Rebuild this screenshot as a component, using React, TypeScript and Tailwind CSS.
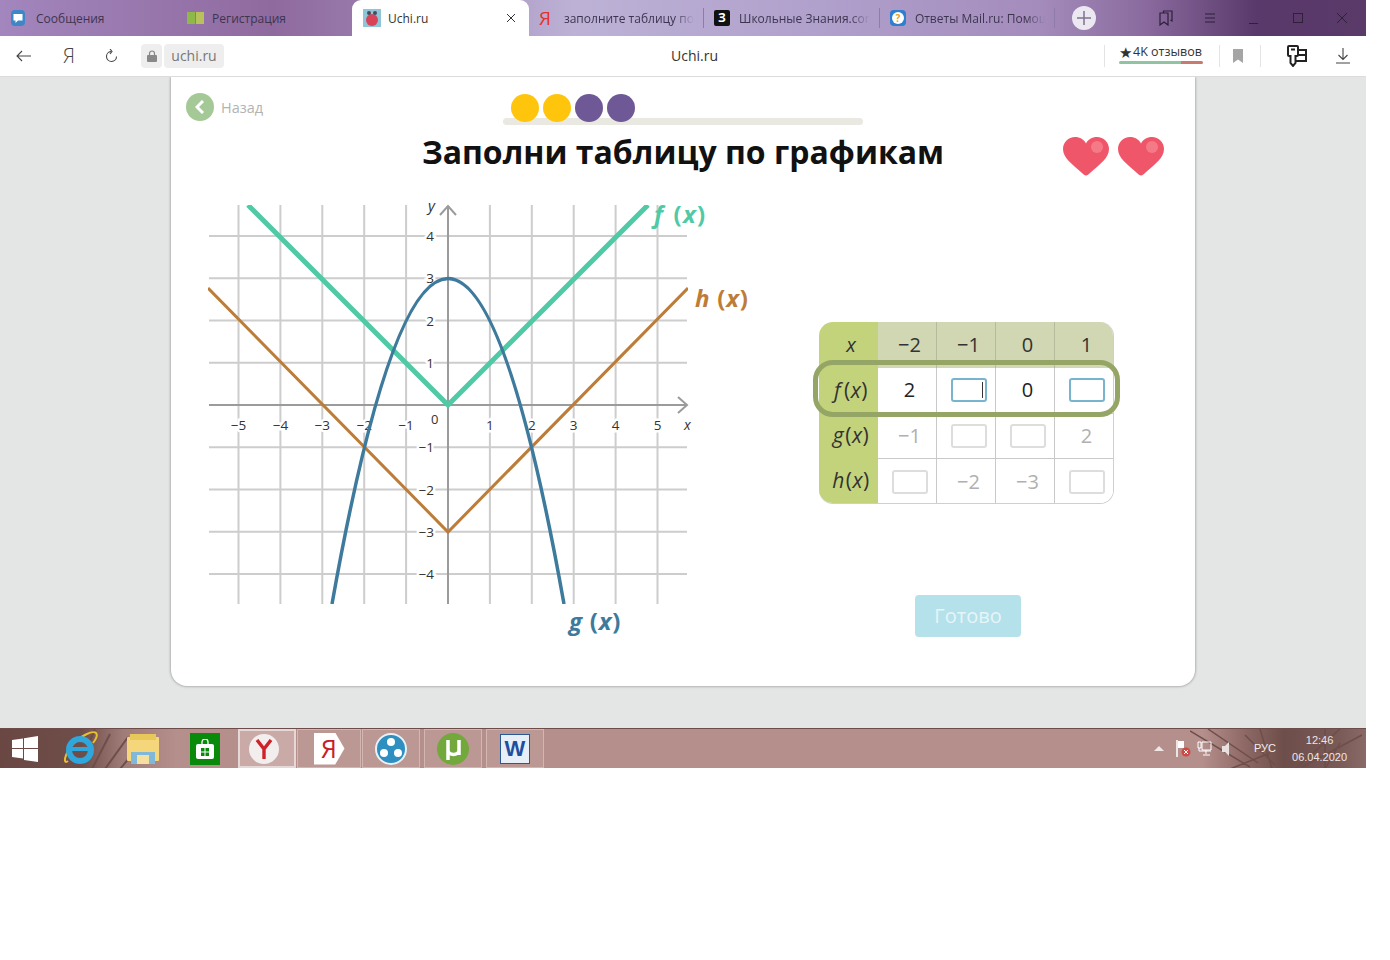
import type { ReactNode } from "react";

const font = { fontFamily: '"Open Sans", "Noto Sans", sans-serif' };

const minus = "\u2212";

function TabFavicon({ kind }: { kind: string }) {
  if (kind === "msg")
    return (
      <svg width="14" height="16" viewBox="0 0 14 16">
        <rect width="14" height="16" rx="4" fill="#3f86c6" />
        <path d="M2.500 4h9v6.500H7L4.500 13v-2.500h-2z" fill="#fff" />
      </svg>
    );
  if (kind === "reg")
    return (
      <svg width="18" height="12" viewBox="0 0 18 12">
        <rect width="8" height="12" fill="#8fb84a" />
        <rect x="9" width="8" height="12" fill="#b9c25a" />
      </svg>
    );
  if (kind === "uchi")
    return (
      <svg width="18" height="18" viewBox="0 0 18 18">
        <rect width="18" height="18" fill="#8ec5d8" />
        <circle cx="9" cy="11" r="6" fill="#d9435a" />
        <circle cx="6" cy="4" r="2" fill="#4a4a5a" />
        <circle cx="12" cy="4" r="2" fill="#4a4a5a" />
      </svg>
    );
  if (kind === "ya")
    return <span className="w-[16px] text-[19px] leading-none text-[#e5322d]">Я</span>;
  if (kind === "zn")
    return (
      <span className="flex h-[16px] w-[16px] items-center justify-center rounded-[2px] bg-[#111] text-[12px] font-bold leading-none text-white">
        З
      </span>
    );
  return (
    <span className="flex h-[16px] w-[16px] items-center justify-center rounded-[4px] bg-[#2d7fd0]">
      <span className="flex h-[12px] w-[12px] items-center justify-center rounded-full bg-[#fff] text-[10px] font-bold leading-none text-[#e8a020]">
        ?
      </span>
    </span>
  );
}

function Tab(props: { kind: string; title: string; w: string; sep?: boolean; fade?: boolean; pl: string; gap: string }) {
  return (
    <div className={`flex h-[36px] shrink-0 items-center ${props.w} ${props.pl} ${props.gap}`}>
      <TabFavicon kind={props.kind} />
      <span
        className={`overflow-hidden whitespace-nowrap pt-[1px] text-[12px] text-[#3d3550] ${
          props.fade ? "w-[131px] [mask-image:linear-gradient(90deg,#000_85%,transparent)]" : ""
        }`}
      >
        {props.title}
      </span>
      {props.sep && <span className="ml-auto h-[20px] w-px bg-[#8f7caa]" />}
    </div>
  );
}

function TabStrip() {
  return (
    <div className="flex h-[36px] items-center bg-[linear-gradient(90deg,#a286bd_0%,#8f6a9f_20%,#9a7cae_28%,#bdb2d6_42%,#b0a0cc_60%,#a48cbc_76%,#8a6a9e_84%,#59386b_92%,#5a3a68_100%)]">
      <Tab kind="msg" title="Сообщения" w="w-[176px]" pl="pl-[11px]" gap="gap-[11px]" />
      <Tab kind="reg" title="Регистрация" w="w-[176px]" pl="pl-[11px]" gap="gap-[7px]" />
      <div className="flex h-[36px] w-[177px] shrink-0 items-center rounded-t-[9px] bg-white pl-[11px] pr-[13px]">
        <TabFavicon kind="uchi" />
        <span className="ml-[7px] flex-1 pt-[1px] text-[12px] text-[#333]">Uchi.ru</span>
        <svg width="10" height="10" viewBox="0 0 10 10" stroke="#333" strokeWidth="1">
          <path d="M1 1l8 8M9 1l-8 8" />
        </svg>
      </div>
      <Tab kind="ya" title="заполните таблицу по графикам" w="w-[175px]" pl="pl-[10px]" gap="gap-[9px]" sep fade />
      <Tab kind="zn" title="Школьные Знания.com" w="w-[176px]" pl="pl-[10px]" gap="gap-[9px]" sep fade />
      <Tab kind="ans" title="Ответы Mail.ru: Помощь" w="w-[175px]" pl="pl-[10px]" gap="gap-[9px]" sep fade />
      <span className="ml-[17px] flex h-[24px] w-[24px] shrink-0 items-center justify-center rounded-full bg-[#ece8f2]">
        <svg width="14" height="14" viewBox="0 0 14 14" stroke="#7d7390" strokeWidth="1.500">
          <path d="M7 0v14M0 7h14" />
        </svg>
      </span>
      <div className="ml-[63px] flex items-center">
        <svg width="14" height="16" viewBox="0 0 14 16" fill="none" stroke="#2d2038" strokeWidth="1.200">
          <path d="M4.500 3V1h8.500v10l-1.500-1M1 3h8v12l-4-3-4 3z" />
        </svg>
        <svg className="ml-[32px]" width="10" height="10" viewBox="0 0 10 10" stroke="#2d2038">
          <path d="M0 1h10M0 5h10M0 9h10" />
        </svg>
        <span className="ml-[34px] mt-[10px] h-px w-[9px] bg-[#2d2038]" />
        <span className="ml-[35px] h-[10px] w-[10px] border border-[#2d2038]" />
        <svg className="ml-[34px]" width="10" height="10" viewBox="0 0 10 10" stroke="#2d2038">
          <path d="M0 0l10 10M10 0L0 10" />
        </svg>
      </div>
    </div>
  );
}

function AddressBar() {
  return (
    <div className="flex h-[41px] items-center rounded-t-[10px] border-b border-[#dcdcdc] bg-white">
      <svg className="ml-[16px]" width="15" height="12" viewBox="0 0 15 12" fill="none" stroke="#444" strokeWidth="1.100">
        <path d="M15 6H1M6 1L1 6l5 5" />
      </svg>
      <span className="ml-[32px] w-[12px] text-[20px] font-light leading-none text-[#444]">Я</span>
      <svg className="ml-[30px]" width="13" height="14" viewBox="0 0 13 14" fill="none" stroke="#444" strokeWidth="1.100">
        <path d="M6 2.500a5 5 0 1 0 5.500 5M5 0l2 2.500L5 5" />
      </svg>
      <span className="ml-[23px] flex h-[24px] w-[21px] items-center justify-center rounded-[4px] bg-[#eeeeee]">
        <svg width="10" height="12" viewBox="0 0 10 12">
          <path d="M2.500 5V3.500a2.500 2.500 0 0 1 5 0V5" fill="none" stroke="#888" strokeWidth="1.200" />
          <rect y="5" width="10" height="7" rx="1" fill="#888" />
        </svg>
      </span>
      <span className="ml-[2px] flex h-[24px] w-[60px] items-center justify-center rounded-[4px] bg-[#eeeeee] pb-[1px] text-[14px] text-[#777]">
        uchi.ru
      </span>
      <span className="ml-[447px] w-[50px] pb-[1px] text-[14px] text-[#333]">Uchi.ru</span>
      <span className="ml-[383px] h-[22px] w-px bg-[#e4e4e4]" />
      <div className="ml-[14px] w-[84px] pb-[4px]">
        <div className="flex items-center whitespace-nowrap text-[12.500px] leading-[16px] text-[#333]">
          <span className="mr-[1px] text-[15px] leading-[16px]">★</span>4K отзывов
        </div>
        <div className="mt-[1px] flex h-[3px] overflow-hidden rounded-full">
          <span className="w-[62px] bg-[#8fc3a2]" />
          <span className="w-[22px] bg-[#c97a70]" />
        </div>
      </div>
      <span className="ml-[16px] h-[22px] w-px bg-[#e4e4e4]" />
      <svg className="ml-[13px]" width="10" height="14" viewBox="0 0 10 14">
        <path d="M0 0h10v14l-5-3.500L0 14z" fill="#a5a5a5" />
      </svg>
      <span className="ml-[17px] h-[22px] w-px bg-[#e4e4e4]" />
      <svg className="ml-[25px]" width="22" height="22" viewBox="0 0 22 22" fill="none" stroke="#222" strokeWidth="2">
        <path d="M3 1h8a1 1 0 0 1 1 1v8a1 1 0 0 1-1 1H9.500v7L7 21l-2.500-3v-7H3a1 1 0 0 1-1-1V2a1 1 0 0 1 1-1zM12 5h8v11H9.500M12 10h8M5 4.500h4" />
      </svg>
      <svg className="ml-[28px]" width="14" height="16" viewBox="0 0 14 16" fill="none" stroke="#444" strokeWidth="1.100">
        <path d="M7 0v11M2.500 7L7 11.500 11.500 7M0 15h14" />
      </svg>
    </div>
  );
}

function Heart() {
  return (
    <svg width="46" height="39" viewBox="0 0 46 39">
      <path d="M23 38.500c-1.500 0-2.500-1-4-2.500C9 27 0 21 0 12 0 5 5.500 0 12 0c5 0 9 2.500 11 6.500C25 2.500 29 0 34 0c6.500 0 12 5 12 12 0 9-9 15-19 24-1.500 1.500-2.500 2.500-4 2.500z" fill="#f0566a" />
      <circle cx="34" cy="10" r="6" fill="#f6838f" opacity="0.8" />
    </svg>
  );
}

function Chart() {
  const xs = [-5, -4, -3, -2, -1, 1, 2, 3, 4, 5];
  const ys = [4, 3, 2, 1, -1, -2, -3, -4];
  const num = (n: number) => (n < 0 ? minus + Math.abs(n) : String(n));
  const px = (n: number) => 448 + n * 41.9;
  const py = (n: number) => 405 - n * 42.25;
  const halo = { paintOrder: "stroke" as const, stroke: "#fff", strokeWidth: 5 };
  return (
    <svg width="550" height="445" viewBox="200 195 550 445" className="shrink-0" style={font}>
      <clipPath id="plot">
        <rect x="208" y="205" width="480" height="399" />
      </clipPath>
      {xs.map((n) => (
        <line key={n} x1={px(n)} x2={px(n)} y1="205" y2="604" stroke="#cdcdcd" strokeWidth="2" />
      ))}
      {ys.map((n) => (
        <line key={n} x1="209" x2="687" y1={py(n)} y2={py(n)} stroke="#cdcdcd" strokeWidth="2" />
      ))}
      <line x1="448" x2="448" y1="206" y2="604" stroke="#9b9b9b" strokeWidth="2" />
      <line x1="209" x2="687" y1="405" y2="405" stroke="#9b9b9b" strokeWidth="2" />
      <path d="M440 215l8-9 8 9M678 397l9 8-9 8" fill="none" stroke="#9b9b9b" strokeWidth="2" />

      {xs.map((n) => (
        <text key={n} x={px(n)} y="430" textAnchor="middle" fontSize="13.500" fill="#333" style={halo}>
          {num(n)}
        </text>
      ))}
      {ys.map((n) => (
        <text key={n} x="434" y={py(n) + 5} textAnchor="end" fontSize="13.500" fill="#333" style={halo}>
          {num(n)}
        </text>
      ))}
      <text x="431" y="424" fontSize="13" fill="#333">0</text>
      <text x="684" y="430" fontSize="14" fontStyle="italic" fill="#333">x</text>
      <text x="428" y="211" fontSize="15" fontStyle="italic" fill="#333">y</text>

      <g clipPath="url(#plot)" fill="none">
        <path d="M248 205L448 405L648 205" stroke="#4fc9a6" strokeWidth="5" />
        <path d="M208 288L448 532L688 288" stroke="#bd7d38" strokeWidth="3" />
        <path d="M332 604Q448 -47 564 604" stroke="#3d7a9c" strokeWidth="3.500" />
      </g>

      <text x="654" y="223" fontSize="24" fontWeight="700" fill="#4fc9a6" letterSpacing="1.200">
        <tspan fontStyle="italic">f</tspan>
        <tspan dx="2"> (</tspan>
        <tspan fontStyle="italic">x</tspan>)
      </text>
      <text x="695" y="307" fontSize="24" fontWeight="700" fill="#bd7d38" letterSpacing="0.800">
        <tspan fontStyle="italic">h</tspan>
        <tspan> (</tspan>
        <tspan fontStyle="italic">x</tspan>)
      </text>
      <text x="569" y="630" fontSize="24" fontWeight="700" fill="#3d7a9c" letterSpacing="0.800">
        <tspan fontStyle="italic">g</tspan>
        <tspan> (</tspan>
        <tspan fontStyle="italic">x</tspan>)
      </text>
    </svg>
  );
}

function Input({ active, caret }: { active?: boolean; caret?: boolean }) {
  return (
    <span
      className={`flex h-[24px] w-[36px] items-center justify-end rounded-[3px] border-2 bg-white pr-[2px] ${
        active ? "border-[#79b4cf]" : "border-[#dddddd]"
      }`}
    >
      {caret && <span className="h-[16px] w-[1px] bg-[#333]" />}
    </span>
  );
}

function Fn({ n, gap }: { n: string; gap: string }) {
  return (
    <span className="text-[21px] tracking-[0.5px] text-[#333]">
      <i className={gap}>{n}</i>(<i>x</i>)
    </span>
  );
}

function Cell({ children, cls }: { children?: ReactNode; cls: string }) {
  return <div className={`flex items-center justify-center pl-[5px] text-[20px] ${cls}`}>{children}</div>;
}

function ValueTable() {
  const head = "bg-[#d0d7b2] pb-[1px] text-[#333] border-r border-[#b7bb9e]";
  const side = "bg-[#c3d37c]";
  const on = "bg-white pb-[2px] text-[#222] border-r border-[#c9c9c9]";
  const off = "bg-white text-[#b0b0b0] border-r border-[#c9c9c9] border-t";
  return (
    <div className="relative h-[182px] w-[295px] shrink-0">
      <div className="grid h-[182px] grid-cols-[59px_59px_59px_59px_58px] grid-rows-[46px_45px_45px_46px] overflow-hidden rounded-[14px] border-b border-r border-[#cfcfcf]">
        <Cell cls={side}>
          <i className="text-[#333]">x</i>
        </Cell>
        <Cell cls={head}>{minus}2</Cell>
        <Cell cls={head}>{minus}1</Cell>
        <Cell cls={head}>0</Cell>
        <Cell cls={head + " border-r-0"}>1</Cell>

        <Cell cls={side}>
          <Fn n="f" gap="mr-[3px]" />
        </Cell>
        <Cell cls={on}>2</Cell>
        <Cell cls={on}>
          <Input active caret />
        </Cell>
        <Cell cls={on}>0</Cell>
        <Cell cls={on + " border-r-0"}>
          <Input active />
        </Cell>

        <Cell cls={side}>
          <Fn n="g" gap="mr-px" />
        </Cell>
        <Cell cls={off}>{minus}1</Cell>
        <Cell cls={off}>
          <Input />
        </Cell>
        <Cell cls={off}>
          <Input />
        </Cell>
        <Cell cls={off + " border-r-0"}>2</Cell>

        <Cell cls={side}>
          <Fn n="h" gap="mr-px" />
        </Cell>
        <Cell cls={off}>
          <Input />
        </Cell>
        <Cell cls={off}>{minus}2</Cell>
        <Cell cls={off}>{minus}3</Cell>
        <Cell cls={off + " border-r-0"}>
          <Input />
        </Cell>
      </div>
      <div className="absolute left-[-6px] top-[38px] h-[57px] w-[307px] rounded-[20px] border-[5px] border-[#95a566]" />
    </div>
  );
}

function Card() {
  return (
    <div className="ml-[171px] h-[609px] w-[1024px] rounded-b-[16px] bg-white shadow-[0_0_3px_rgba(0,0,0,0.45)]" style={font}>
      <div className="flex h-[49px] pt-[16px]">
        <div className="ml-[15px] flex w-[317px] shrink-0 items-center self-start">
          <span className="flex h-[28px] w-[28px] items-center justify-center rounded-full bg-[#a5c996]">
            <svg width="10" height="14" viewBox="0 0 10 14" fill="none" stroke="#fff" strokeWidth="3">
              <path d="M8 1L2 7l6 6" />
            </svg>
          </span>
          <span className="ml-[7px] pt-[1px] text-[14.500px] text-[#b3b3b3]">Назад</span>
        </div>
        <div className="relative h-[32px] w-[360px]">
          <div className="absolute left-0 top-[25px] h-[7px] w-[360px] rounded-full bg-[#e9e9e2]" />
          <div className="relative ml-[8px] mt-[1px] flex gap-[4px]">
            <span className="h-[28px] w-[28px] rounded-full bg-[#ffc50d]" />
            <span className="h-[28px] w-[28px] rounded-full bg-[#ffc50d]" />
            <span className="h-[28px] w-[28px] rounded-full bg-[#6f5896]" />
            <span className="h-[28px] w-[28px] rounded-full bg-[#6f5896]" />
          </div>
        </div>
      </div>
      <div className="relative flex h-[69px] justify-center">
        <h1 className="mt-[5px] text-[32px] font-bold leading-[42px] text-[#111]">Заполни таблицу по графикам</h1>
        <div className="absolute left-[892px] top-[11px] flex gap-[9px]">
          <Heart />
          <Heart />
        </div>
      </div>
      <div className="flex pl-[29px]">
        <Chart />
        <div className="ml-[69px] pt-[127px]">
          <ValueTable />
          <div className="ml-[96px] mt-[91px] flex h-[42px] w-[106px] items-center justify-center rounded-[4px] bg-[#b5e1ea] text-[20px] text-[#e6f5f8]">
            Готово
          </div>
        </div>
      </div>
    </div>
  );
}

function TaskIcon({ children, cls }: { children: ReactNode; cls: string }) {
  return <div className={`flex h-[39px] items-center justify-center ${cls}`}>{children}</div>;
}

function Taskbar() {
  const pinned = "border border-[#d3b6b2] bg-[#bb9894]";
  return (
    <div className="relative flex h-[40px] items-center overflow-hidden border-t border-[#6e4c4a] bg-[linear-gradient(90deg,#6a4743_0%,#6f4d49_6%,#a07c78_9%,#b48f8b_13%,#b48f8b_88%,#8f6a66_91%,#6e4e4a_94%,#7a5a56_98%,#8a6a66_100%)]">
      <svg className="absolute left-[50px] top-0" width="90" height="40" viewBox="0 0 90 40" fill="none" stroke="#6e4e4a" strokeWidth="2">
        <path d="M10 40L30 0M28 40L45 0M42 40L60 5M55 40L78 8M70 40L85 22" />
      </svg>
      <svg className="absolute left-[1190px] top-0" width="176" height="40" viewBox="0 0 176 40" fill="none" stroke="#6e4e4a" strokeWidth="1.500">
        <path d="M0 2l60 36M18 0l50 34M70 0l12 40M55 6l30 30M150 0l-45 40M172 6l-60 32M135 0v40M150 14l-15 26M40 40l40-16" />
      </svg>
      <svg className="relative ml-[12px]" width="26" height="26" viewBox="0 0 26 26" fill="#fff">
        <path d="M0 4l11-1.500V12H0zM12 2.300L26 0v12H12zM0 13h11v9.500L0 21zM12 13h14v13l-14-2z" />
      </svg>
      <svg className="relative ml-[24px]" width="36" height="36" viewBox="0 0 36 36">
        <path d="M6 30C1 34 2 24 10 14 18 5 31-1 34 2c2 2 0 6-3 10" fill="none" stroke="#e8c030" strokeWidth="2" />
        <circle cx="18" cy="19" r="11" fill="none" stroke="#2fa6dc" strokeWidth="6" />
        <path d="M10 18h17" stroke="#2fa6dc" strokeWidth="4" />
      </svg>
      <svg className="relative ml-[29px]" width="32" height="30" viewBox="0 0 32 30">
        <rect y="3" width="32" height="24" rx="1" fill="#f5d67a" />
        <rect x="3" y="0" width="26" height="6" fill="#e8c85a" />
        <rect x="4" y="18" width="24" height="12" fill="#7fb8d8" />
        <rect x="10" y="21" width="12" height="9" fill="#f5e0a0" />
      </svg>
      <span className="relative ml-[31px] flex h-[32px] w-[30px] items-center justify-center bg-[#0a8a0a]">
        <svg width="18" height="20" viewBox="0 0 18 20">
          <path d="M6 5V3a3 3 0 0 1 6 0v2" fill="none" stroke="#fff" strokeWidth="1.300" />
          <rect y="5" width="18" height="15" rx="2" fill="#fff" />
          <path d="M5 9h3.500v3.500H5zM9.500 9H13v3.500H9.500zM5 13.500h3.500V17H5zM9.500 13.500H13V17H9.500z" fill="#0a8a0a" />
        </svg>
      </span>
      <TaskIcon cls="relative ml-[18px] w-[58px] border-2 border-[#e6d8d6] bg-[#c9aaa6] pr-[6px]">
        <span className="flex h-[30px] w-[30px] items-center justify-center rounded-full bg-[#f3eeee]">
          <svg width="18" height="20" viewBox="0 0 18 20" fill="none" stroke="#d0202a" strokeWidth="3.400">
            <path d="M2 1l7 9 7-9M9 10v10" />
          </svg>
        </span>
      </TaskIcon>
      <TaskIcon cls={`relative ml-px w-[64px] ${pinned}`}>
        <span className="flex h-[32px] w-[31px] items-center justify-center bg-white text-[25px] leading-none text-[#c8202a] [clip-path:polygon(0_0,70%_0,100%_50%,70%_100%,0_100%)]">
          Я
        </span>
      </TaskIcon>
      <TaskIcon cls={`relative ml-px w-[58px] ${pinned}`}>
        <svg width="32" height="32" viewBox="0 0 32 32">
          <circle cx="16" cy="16" r="15" fill="#2e8fc0" stroke="#e8f2f6" strokeWidth="2" />
          <circle cx="16" cy="9" r="4" fill="#fff" />
          <circle cx="9" cy="20" r="4" fill="#fff" />
          <circle cx="23" cy="20" r="4" fill="#fff" />
        </svg>
      </TaskIcon>
      <TaskIcon cls={`relative ml-[4px] w-[58px] ${pinned}`}>
        <svg width="32" height="32" viewBox="0 0 32 32">
          <circle cx="16" cy="16" r="16" fill="#72a83c" />
          <path d="M11 7v20M11 17c0 6 11 6 11 0M22 7v15" fill="none" stroke="#fff" strokeWidth="3.500" />
        </svg>
      </TaskIcon>
      <TaskIcon cls={`relative ml-[4px] w-[58px] ${pinned}`}>
        <span className="flex h-[30px] w-[30px] items-center justify-center border border-[#2b5797] bg-[#e6eef8] font-['Liberation_Sans',sans-serif] text-[22px] font-bold leading-none text-[#1d4f9e]">
          W
        </span>
      </TaskIcon>
      <svg className="relative ml-[610px]" width="10" height="5" viewBox="0 0 10 5">
        <path d="M0 5l5-5 5 5z" fill="#f0e8e6" />
      </svg>
      <svg className="relative ml-[12px]" width="16" height="17" viewBox="0 0 16 17">
        <path d="M1 0v17" stroke="#fff" strokeWidth="1.500" />
        <path d="M2 1h6v7H2z" fill="#fff" />
        <circle cx="10" cy="12" r="4.500" fill="#d04a45" />
        <path d="M8 10l4 4M12 10l-4 4" stroke="#fff" />
      </svg>
      <svg className="relative ml-[5px]" width="15" height="15" viewBox="0 0 15 15" fill="none" stroke="#fff">
        <path d="M5 1h9v8H5zM1 1h3v6H1zM2 7v3h12M9 9v4M6 14h7" />
      </svg>
      <svg className="relative ml-[10px]" width="10" height="14" viewBox="0 0 10 14" fill="#e8e0de">
        <path d="M0 4h3l4-4v14l-4-4H0z" />
      </svg>
      <span className="relative ml-[22px] font-['Liberation_Sans',sans-serif] text-[11px] text-[#f4eeee]">РУС</span>
      <div className="relative ml-[16px] w-[55px] text-center font-['Liberation_Sans',sans-serif] text-[11px] leading-[17px] text-[#efe6e4]">
        <div>12:46</div>
        <div className="whitespace-nowrap">06.04.2020</div>
      </div>
    </div>
  );
}

export default function App() {
  return (
    <div className="h-[960px] w-[1390px] overflow-hidden bg-white" style={font}>
      <div className="w-[1366px]">
        <TabStrip />
        <AddressBar />
        <div className="h-[651px] overflow-hidden bg-[#e4e6e5]">
          <Card />
        </div>
        <Taskbar />
      </div>
    </div>
  );
}
